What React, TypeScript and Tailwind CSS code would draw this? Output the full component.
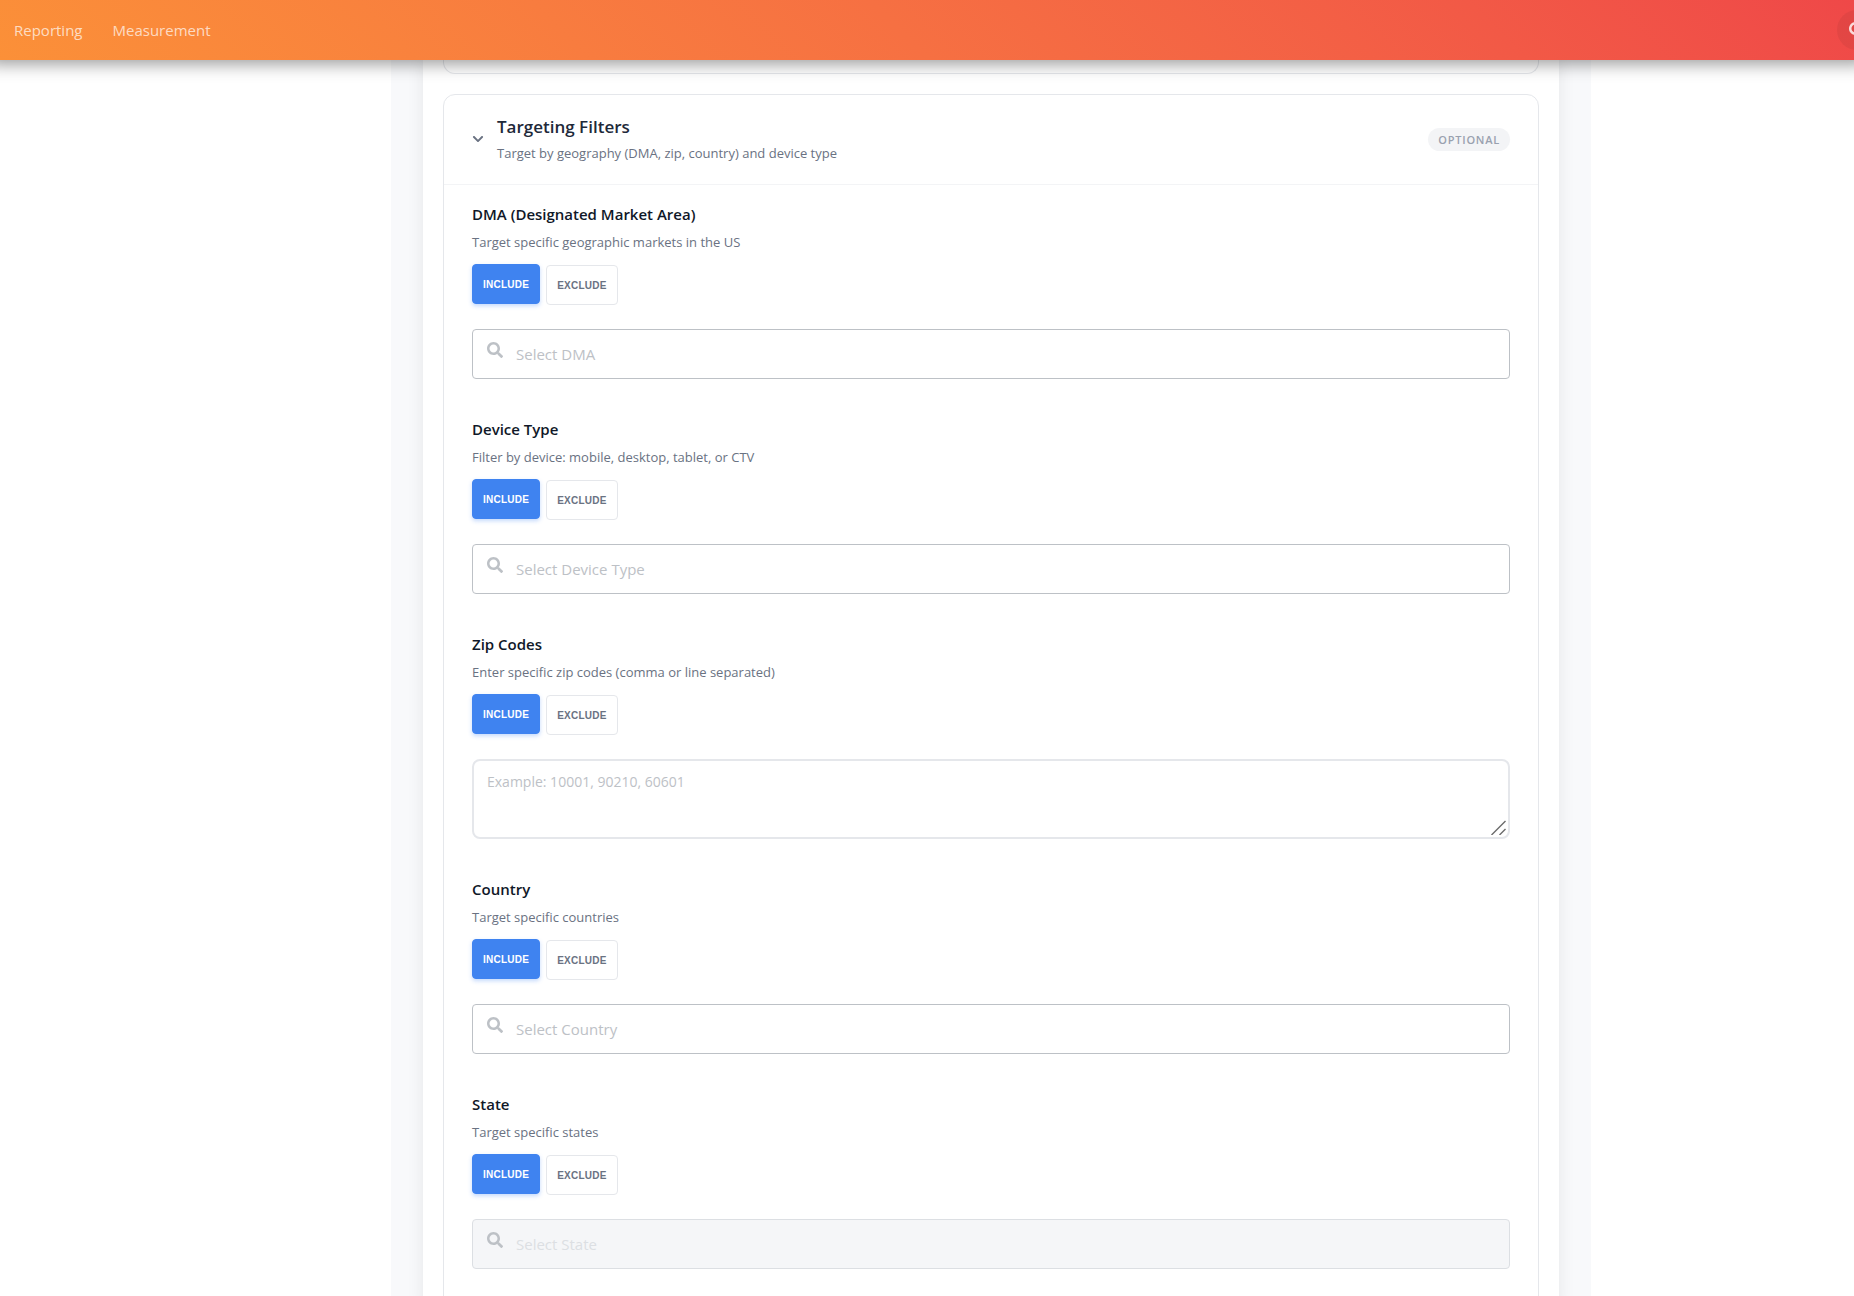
import { useState } from 'react';
import { FaChevronDown, FaSearch } from 'react-icons/fa';

type Mode = 'include' | 'exclude';

interface Filter {
    id: string;
    label: string;
    hint: string;
    placeholder: string;
    kind: 'search' | 'textarea';
    disabled?: boolean;
}

const navigation = [
    { name: 'Reporting', href: '#reporting' },
    { name: 'Measurement', href: '#measurement' },
];

const filters: Filter[] = [
    { id: 'dma', label: 'DMA (Designated Market Area)', hint: 'Target specific geographic markets in the US', placeholder: 'Select DMA', kind: 'search' },
    { id: 'device', label: 'Device Type', hint: 'Filter by device: mobile, desktop, tablet, or CTV', placeholder: 'Select Device Type', kind: 'search' },
    { id: 'zip', label: 'Zip Codes', hint: 'Enter specific zip codes (comma or line separated)', placeholder: 'Example: 10001, 90210, 60601', kind: 'textarea' },
    { id: 'country', label: 'Country', hint: 'Target specific countries', placeholder: 'Select Country', kind: 'search' },
    { id: 'state', label: 'State', hint: 'Target specific states', placeholder: 'Select State', kind: 'search', disabled: true },
];

function Header() {
    return (
        <header className="relative z-10 flex h-[60px] shrink-0 items-center justify-between bg-linear-45 from-[#fb9038] to-[#ef4848] pl-[14px] shadow-[0_-8px_16px_12px_rgba(0,0,0,0.4)]">
            <nav className="flex items-center gap-[30px]">
                {navigation.map((item) => (
                    <a key={item.name} href={item.href} className="text-[15px] leading-6 text-white/70">
                        {item.name}
                    </a>
                ))}
            </nav>
            <button type="button" aria-label="Search" className="-mr-[23px] flex size-10 items-center justify-center rounded-full bg-black/5 text-white/80">
                <FaSearch className="size-4" />
            </button>
        </header>
    );
}

function ModeToggle() {
    const [mode, setMode] = useState<Mode>('include');
    const modes: Mode[] = ['include', 'exclude'];

    return (
        <div className="mt-[13px] flex gap-1.5">
            {modes.map((m) => (
                <button
                    key={m}
                    type="button"
                    aria-pressed={mode === m}
                    onClick={() => setMode(m)}
                    className={`h-10 rounded border px-2.5 font-['Liberation_Sans',sans-serif] text-[10px] font-bold uppercase tracking-wide ${mode === m
                        ? '-translate-y-px border-[#3f83f0] bg-[#3f83f0] text-white shadow-[0_2px_4px_rgba(59,130,246,0.3)]'
                        : 'border-gray-200 bg-white text-gray-500'
                        }`}
                >
                    {m}
                </button>
            ))}
        </div>
    );
}

function FilterField({ filter }: { filter: Filter }) {
    return (
        <div className="mb-[38px]">
            <label htmlFor={filter.id} className="block text-[15px] font-semibold leading-6 text-gray-900">
                {filter.label}
            </label>
            <p className="mt-1.5 text-[13px] leading-5 text-gray-500">{filter.hint}</p>
            <ModeToggle />
            {filter.kind === 'search' ? (
                <div
                    className={`mt-6 flex h-[50px] items-start rounded border pl-3.5 ${filter.disabled
                        ? 'border-[#dcdfe3] bg-[#f5f6f8]'
                        : 'border-[#bdc1c6] bg-white'
                        }`}
                >
                    <FaSearch className="mt-3 size-4 shrink-0 text-[#bdc1c6]" />
                    <input
                        id={filter.id}
                        type="text"
                        disabled={filter.disabled}
                        placeholder={filter.placeholder}
                        className="ml-[13px] mt-3 h-6 min-w-0 flex-1 bg-transparent text-[15px] outline-none placeholder:text-[#bdc1c6] disabled:placeholder:text-[#dcdfe3]"
                    />
                </div>
            ) : (
                <div className="relative mt-6">
                    <textarea
                        id={filter.id}
                        placeholder={filter.placeholder}
                        className="block h-20 w-full resize-none rounded-lg border-2 border-gray-200 px-[13px] py-[11px] text-sm leading-5 outline-none placeholder:text-[#bdc1c6]"
                    />
                    {/* Resize grip */}
                    <svg className="pointer-events-none absolute bottom-1 right-1 size-[15px]" viewBox="0 0 15 15" stroke="#6b6b6b" strokeWidth="1.4" aria-hidden="true">
                        <path d="M0.5 15L14.5 1M8.5 15L14.5 9" />
                    </svg>
                </div>
            )}
        </div>
    );
}

export default function App() {
    const [open, setOpen] = useState(true);

    return (
        <div className="flex h-screen flex-col overflow-hidden bg-white font-['Open_Sans',sans-serif]">
            <Header />
            <main className="min-h-0 flex-1 overflow-hidden pl-32">
                <div className="mx-auto max-w-[1200px] bg-[#f8f9fb] px-8">
                    <div className="bg-white px-5 shadow-[0_0_16px_rgba(0,0,0,0.08)]">
                        {/* Tail of the previous section */}
                        <section className="h-3.5 rounded-b-xl border border-t-0 border-gray-200" />

                        <section className="mt-5 rounded-xl border border-gray-200">
                            <div className="flex items-center justify-between border-b border-gray-100 px-7 pt-5 pb-[21px]">
                                <button type="button" aria-expanded={open} onClick={() => setOpen(!open)} className="flex items-center gap-[13px] text-left">
                                    <FaChevronDown className="size-3 text-gray-500" />
                                    <span>
                                        <span className="block text-[17px] font-semibold leading-6 text-gray-800">Targeting Filters</span>
                                        <span className="mt-1 block text-[13px] leading-5 text-gray-500">Target by geography (DMA, zip, country) and device type</span>
                                    </span>
                                </button>
                                <span className="rounded-full bg-gray-100 px-2.5 text-[11px] font-semibold uppercase leading-[23px] tracking-[0.07em] text-gray-400">
                                    Optional
                                </span>
                            </div>
                            {open && (
                                <div className="px-7 pt-[17px]">
                                    {filters.map((filter) => (
                                        <FilterField key={filter.id} filter={filter} />
                                    ))}
                                </div>
                            )}
                        </section>
                    </div>
                </div>
            </main>
        </div>
    );
}
